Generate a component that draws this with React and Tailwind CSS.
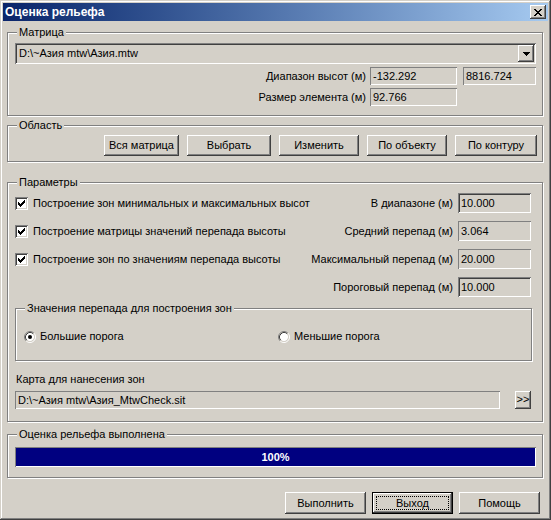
import React from 'react';

// Win2000 style dialog "Оценка рельефа"
const raised = 'bg-[#d4d0c8] shadow-[inset_-1px_-1px_0_#404040,inset_1px_1px_0_#ffffff,inset_-2px_-2px_0_#808080,inset_2px_2px_0_#d4d0c8]';
const sunken = 'shadow-[inset_1px_1px_0_#808080,inset_-1px_-1px_0_#ffffff,inset_2px_2px_0_#404040,inset_-2px_-2px_0_#d4d0c8]';
const flat = 'shadow-[inset_1px_1px_0_#808080,inset_-1px_-1px_0_#ffffff]';

const X_PIXELS = [
  '##....##',
  '.##..##.',
  '..####..',
  '...##...',
  '..####..',
  '.##..##.',
  '##....##',
];

const CHECK_PIXELS = [
  '......#',
  '.....##',
  '#...###',
  '##.###.',
  '#####..',
  '.###...',
  '..#....',
];

function PixelIcon({ rows, color = '#000' }) {
  const w = rows[0].length;
  const h = rows.length;
  return (
    <svg width={w} height={h} viewBox={`0 0 ${w} ${h}`} shapeRendering="crispEdges">
      {rows.map((r, y) =>
        r.split('').map((c, x) => (c === '#' ? <rect key={`${x}-${y}`} x={x} y={y} width="1" height="1" fill={color} /> : null))
      )}
    </svg>
  );
}

function CloseBtn() {
  return (
    <div className={`w-[16px] h-[14px] flex items-center justify-center ${raised}`}>
      <PixelIcon rows={X_PIXELS} />
    </div>
  );
}

function Group({ label, className = '', children }) {
  return (
    <div className={`relative shrink-0 border border-[#808080] shadow-[1px_1px_0_#ffffff,inset_1px_1px_0_#ffffff] ${className}`}>
      <span className="absolute -top-[7px] left-[9px] bg-[#d4d0c8] px-[2px] leading-[13px] whitespace-nowrap">{label}</span>
      {children}
    </div>
  );
}

function Btn({ children, className = '', isDefault = false }) {
  if (isDefault) {
    return (
      <div className={`relative border border-black ${className}`}>
        <div className={`w-full h-full flex items-center justify-center ${raised}`}>{children}</div>
        <span className="absolute inset-[3px] border border-dotted border-black" />
      </div>
    );
  }
  return <div className={`flex items-center justify-center ${raised} ${className}`}>{children}</div>;
}

function Field({ value, className = '', edge = flat }) {
  return (
    <div className={`flex items-center pl-[3px] whitespace-nowrap overflow-hidden ${edge} ${className}`}>{value}</div>
  );
}

function Checkbox({ label }) {
  return (
    <div className="flex items-center">
      <div className={`w-[13px] h-[13px] bg-white flex items-center justify-center ${sunken}`}>
        <PixelIcon rows={CHECK_PIXELS} />
      </div>
      <span className="ml-[5px] whitespace-nowrap">{label}</span>
    </div>
  );
}

function Radio({ checked }) {
  return (
    <svg width="12" height="12" viewBox="0 0 12 12">
      <circle cx="6" cy="6" r="4.2" fill="#ffffff" />
      <path d="M2.11 9.89 A5.5 5.5 0 0 1 9.89 2.11" fill="none" stroke="#808080" />
      <path d="M9.89 2.11 A5.5 5.5 0 0 1 2.11 9.89" fill="none" stroke="#ffffff" />
      <path d="M2.82 9.18 A4.5 4.5 0 0 1 9.18 2.82" fill="none" stroke="#404040" />
      <path d="M9.18 2.82 A4.5 4.5 0 0 1 2.82 9.18" fill="none" stroke="#d4d0c8" />
      {checked && <circle cx="6" cy="6" r="2" fill="#000000" />}
    </svg>
  );
}

function ParamRow({ check, label, value, edge }) {
  return (
    <div className="h-[20px] flex items-center justify-between">
      <div className="ml-[7px]">{check && <Checkbox label={check} />}</div>
      <div className="flex items-center mr-[11px]">
        <span className="mr-[5px] whitespace-nowrap">{label}</span>
        <Field value={value} edge={edge} className="w-[73px] h-[20px]" />
      </div>
    </div>
  );
}

export default function App() {
  return (
    <div className="w-[551px] h-[520px] p-[3px] bg-[#d4d0c8] shadow-[inset_-1px_-1px_0_#404040,inset_1px_1px_0_#d4d0c8,inset_-2px_-2px_0_#808080,inset_2px_2px_0_#ffffff] flex flex-col font-['Liberation_Sans',Arial,sans-serif] text-[11px] leading-[13px] text-black select-none">
      {/* Title bar */}
      <div className="h-[18px] shrink-0 flex items-center justify-between pl-[2px] pr-[2px] bg-gradient-to-r from-[#0a246a] to-[#a6caf0]">
        <span className="text-white font-bold text-[12px]">Оценка рельефа</span>
        <CloseBtn />
      </div>

      <div className="flex flex-col pl-[4px] pr-[5px]">
        {/* Матрица */}
        <Group label="Матрица" className="mt-[11px] h-[84px]">
          <div className={`mt-[10px] ml-[7px] mr-[6px] h-[21px] flex items-center ${sunken}`}>
            <span className="pl-[4px] flex-1 whitespace-nowrap">D:\~Азия mtw\Азия.mtw</span>
            <div className={`w-[16px] h-[17px] mr-[2px] flex items-center justify-center ${raised}`}>
              <svg width="7" height="4" viewBox="0 0 7 4" shapeRendering="crispEdges">
                <path d="M0 0h7v1h-1v1h-1v1h-1v1h-1v-1h-1v-1h-1v-1h-1z" fill="#000" />
              </svg>
            </div>
          </div>
          <div className="mt-[3px] mr-[6px] flex items-center justify-end">
            <span className="mr-[4px] whitespace-nowrap">Диапазон высот (м)</span>
            <Field value="-132.292" className="w-[87px] h-[18px]" />
            <Field value="8816.724" className="ml-[6px] w-[73px] h-[18px]" />
          </div>
          <div className="mt-[3px] mr-[6px] flex items-center justify-end">
            <span className="mr-[4px] whitespace-nowrap">Размер элемента (м)</span>
            <Field value="92.766" className="w-[87px] h-[18px]" />
            <div className="w-[79px]" />
          </div>
        </Group>

        {/* Область */}
        <Group label="Область" className="mt-[9px] h-[37px]">
          <div className="mt-[9px] mr-[5px] flex justify-end gap-[8px]">
            <Btn className="w-[75px] h-[21px]">Вся матрица</Btn>
            <Btn className="w-[84px] h-[21px]">Выбрать</Btn>
            <Btn className="w-[80px] h-[21px]">Изменить</Btn>
            <Btn className="w-[80px] h-[21px]">По объекту</Btn>
            <Btn className="w-[82px] h-[21px]">По контуру</Btn>
          </div>
        </Group>

        {/* Параметры */}
        <Group label="Параметры" className="mt-[20px] h-[240px]">
          <div className="mt-[10px] flex flex-col gap-[8px]">
            <ParamRow check="Построение зон минимальных и максимальных высот" label="В диапазоне (м)" value="10.000" edge={sunken} />
            <ParamRow check="Построение матрицы значений перепада высоты" label="Средний перепад (м)" value="3.064" edge={flat} />
            <ParamRow check="Построение зон по значениям перепада высоты" label="Максимальный перепад (м)" value="20.000" edge={flat} />
            <ParamRow label="Пороговый перепад (м)" value="10.000" edge={sunken} />
          </div>

          <Group label="Значения перепада для построения зон" className="mt-[11px] ml-[7px] mr-[10px] h-[53px]">
            <div className="mt-[21px] ml-[8px] flex items-center">
              <div className="w-[254px] flex items-center">
                <Radio checked />
                <span className="ml-[4px]">Большие порога</span>
              </div>
              <Radio />
              <span className="ml-[4px]">Меньшие порога</span>
            </div>
          </Group>

          <div className="mt-[12px] ml-[8px]">Карта для нанесения зон</div>
          <div className="mt-[5px] ml-[7px] flex items-start">
            <Field value="D:\~Азия mtw\Азия_MtwCheck.sit" className="w-[485px] h-[18px]" />
            <Btn className="ml-[15px] w-[16px] h-[18px] pb-[1px]">&gt;&gt;</Btn>
          </div>
        </Group>

        {/* Progress */}
        <Group label="Оценка рельефа выполнена" className="mt-[12px] h-[44px]">
          <div className={`mt-[12px] ml-[7px] mr-[6px] h-[20px] p-[1px] ${flat}`}>
            <div className="w-full h-full bg-[#000080] flex items-center justify-center text-white font-bold">100%</div>
          </div>
        </Group>

        {/* Buttons */}
        <div className="mt-[14px] mr-[3px] flex justify-end gap-[6px]">
          <Btn className="w-[81px] h-[22px]">Выполнить</Btn>
          <Btn className="w-[81px] h-[22px]" isDefault>Выход</Btn>
          <Btn className="w-[81px] h-[22px]">Помощь</Btn>
        </div>
      </div>
    </div>
  );
}
